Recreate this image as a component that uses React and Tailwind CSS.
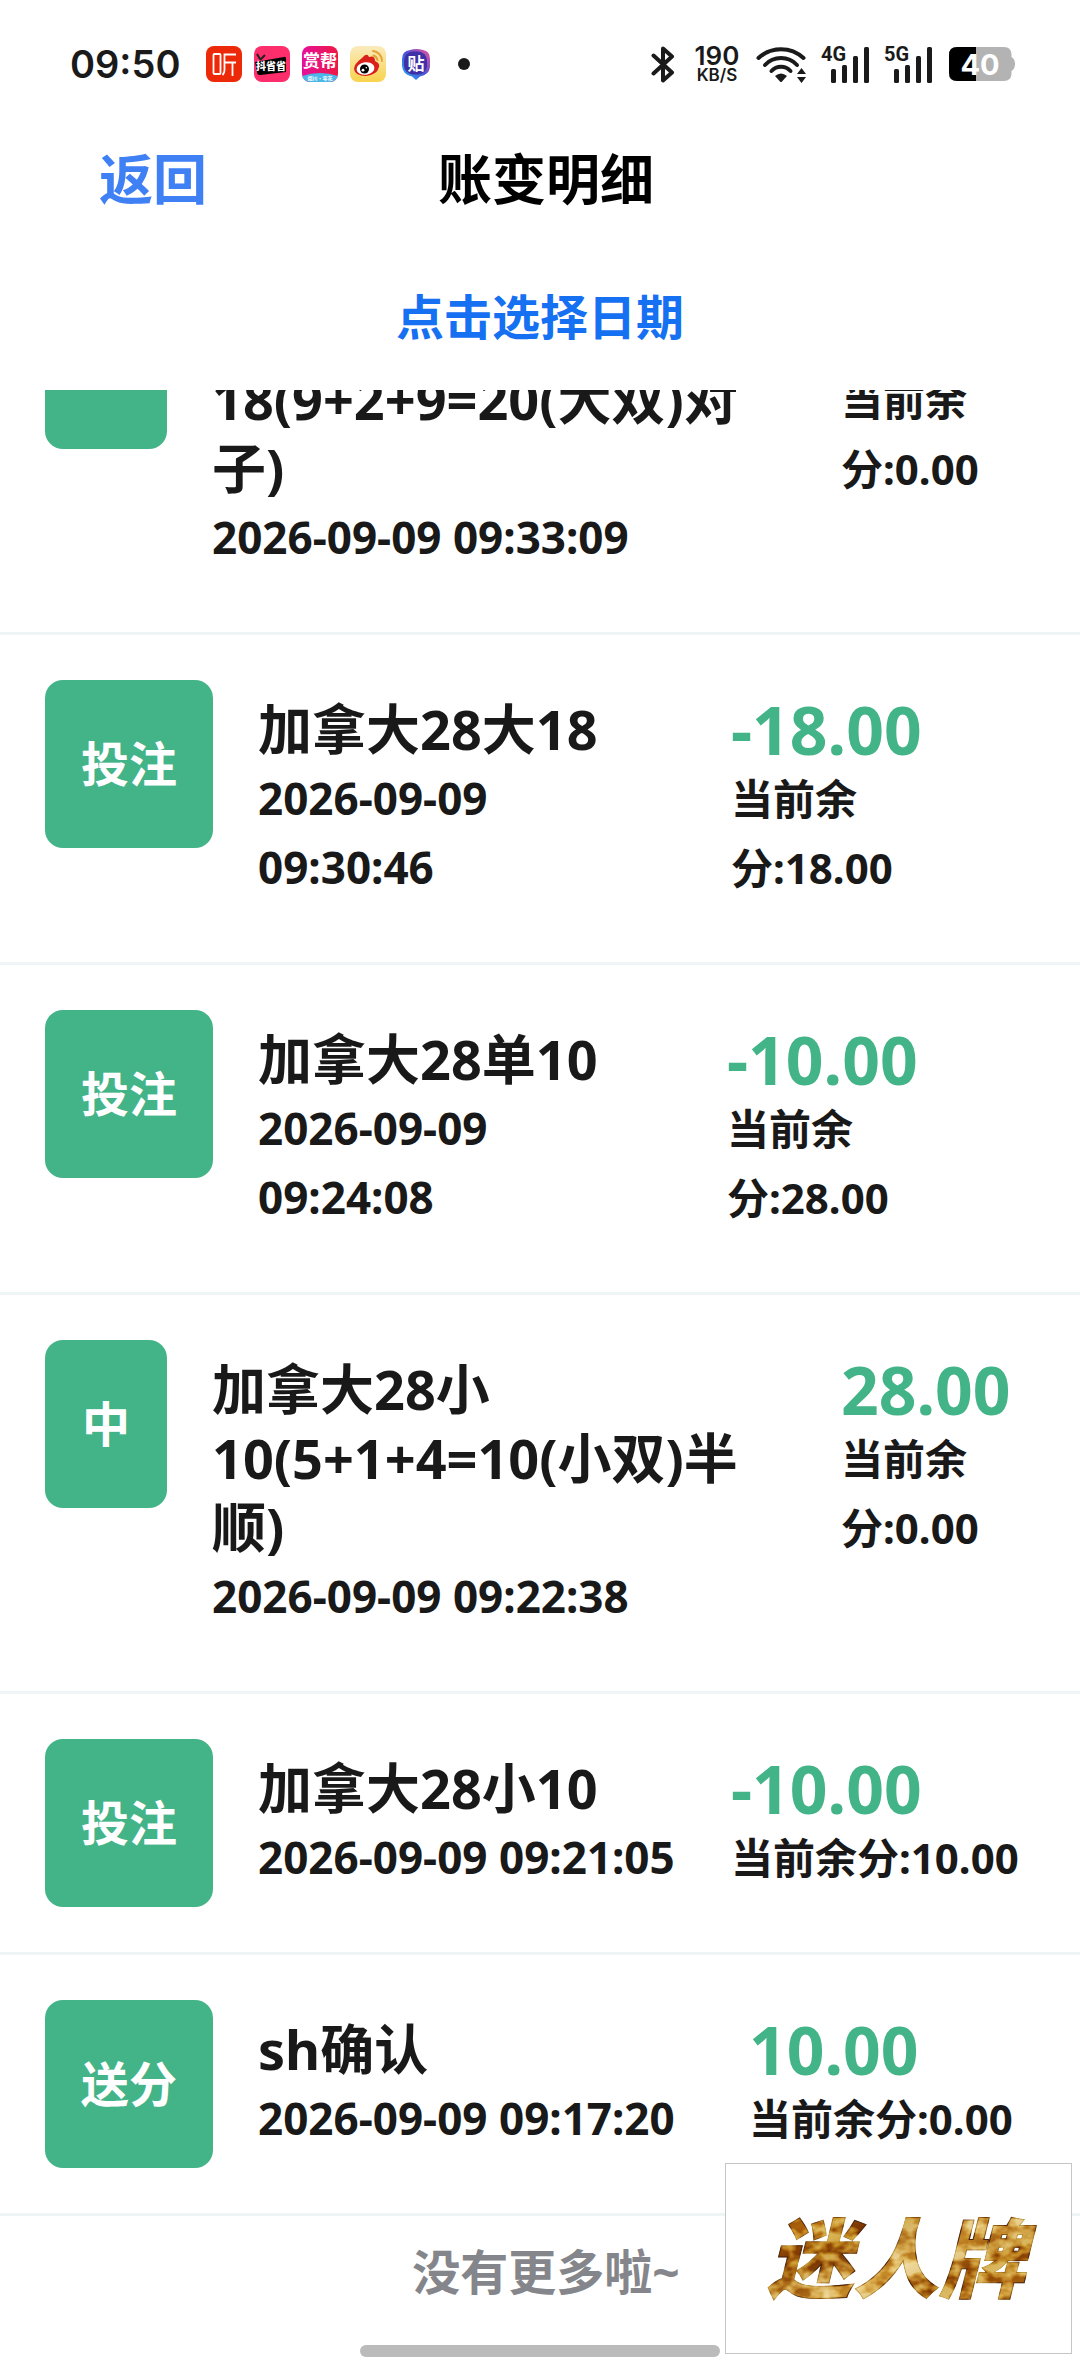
import React from 'react'

const records = [
  {
    type: '中',
    title: '加拿大28大\n18(9+2+9=20(大双)对\n子)',
    time: '2026-09-09 09:33:09',
    amount: '28.00',
    balance: '当前余\n分:0.00',
    col: 'w-[180px]',
    first: true,
  },
  {
    type: '投注',
    title: '加拿大28大18',
    time: '2026-09-09\n09:30:46',
    amount: '-18.00',
    balance: '当前余\n分:18.00',
    col: 'w-[290px]',
  },
  {
    type: '投注',
    title: '加拿大28单10',
    time: '2026-09-09\n09:24:08',
    amount: '-10.00',
    balance: '当前余\n分:28.00',
    col: 'w-[294px]',
  },
  {
    type: '中',
    title: '加拿大28小\n10(5+1+4=10(小双)半\n顺)',
    time: '2026-09-09 09:22:38',
    amount: '28.00',
    balance: '当前余\n分:0.00',
    col: 'w-[180px]',
  },
  {
    type: '投注',
    title: '加拿大28小10',
    time: '2026-09-09 09:21:05',
    amount: '-10.00',
    balance: '当前余分:10.00',
    col: 'w-[290px]',
  },
  {
    type: '送分',
    title: 'sh确认',
    time: '2026-09-09 09:17:20',
    amount: '10.00',
    balance: '当前余分:0.00',
    col: 'w-[272px]',
  },
]

const App = () => {
  return (
    <div className="relative flex min-h-screen flex-col bg-white font-['Noto_Sans','Noto_Sans_CJK_SC',sans-serif] font-bold text-[#191919]">
      <StatusBar />

      <header className='grid h-[102px] grid-cols-3 items-center pl-[99px] pr-[87px] text-[54px] leading-[72px]'>
        <button className='justify-self-start text-[#3f80f5]'>返回</button>
        <h1 className='justify-self-center whitespace-nowrap text-black'>账变明细</h1>
      </header>

      <div className='flex justify-center pt-[51px] pb-[37px]'>
        <button className='text-5xl leading-[72px] text-[#1670f2]'>点击选择日期</button>
      </div>

      <main className='flex-1 overflow-hidden'>
        <ul>
          {records.map((record, index) => (
            <Record key={index} record={record} />
          ))}
        </ul>
        <p className='pt-5 pl-3 text-center text-5xl leading-[72px] text-[#85868b]'>没有更多啦~</p>
      </main>

      <FloatLogo />
      <div className='absolute bottom-[19px] left-1/2 h-3 w-[360px] -translate-x-1/2 rounded-full bg-[#bbbbbb]'></div>
    </div>
  )
}

const Record = ({ record }) => {
  return (
    <li className={`flex items-start border-b-3 border-[#eff4f7] p-[45px] ${record.first ? '-mt-[154px]' : ''}`}>
      <div className='flex h-[168px] min-w-[122px] shrink-0 items-center justify-center rounded-[18px] bg-[#43b388] px-9 text-5xl text-white'>
        {record.type}
      </div>
      <div className='flex-1 whitespace-pre py-[15px] pl-[45px] leading-[69px]'>
        <h2 className='text-[54px] leading-[69px]'>{record.title}</h2>
        <time className='block text-[44px] leading-[69px]'>{record.time}</time>
      </div>
      <div className={`mr-[14px] shrink-0 whitespace-pre py-[15px] ${record.col}`}>
        <div className='text-[66px] leading-[69px] text-[#43b388]'>{record.amount}</div>
        <div className='text-[42px] leading-[69px]'>{record.balance}</div>
      </div>
    </li>
  )
}

const StatusBar = () => {
  return (
    <div className="flex h-[128px] items-center pl-[70px] pr-[65px] font-['Inter',sans-serif] text-[#1a1a1a]">
      <span className='w-[136px] text-[38px] font-semibold leading-none'>09:50</span>
      <div className='flex items-center gap-3'>
        <ListenIcon />
        <SaveIcon />
        <RewardIcon />
        <WeiboIcon />
        <TiebaIcon />
      </div>
      <span className='ml-7 size-3 rounded-full bg-[#1a1a1a]'></span>

      <div className='ml-auto flex items-center'>
        <svg width='24' height='37' viewBox='0 0 24 37' fill='none' stroke='#1a1a1a' strokeWidth='4' strokeLinejoin='round' strokeLinecap='round'>
          <path d='M2.500 9.500 L21 26.500 L12 34.500 V2.500 L21 10.500 L2.500 27.500' />
        </svg>
        <div className='ml-[18px] flex w-[48px] flex-col items-center'>
          <span className='text-[26px] font-semibold leading-[22px]'>190</span>
          <span className='text-[17px] font-semibold leading-4'>KB/S</span>
        </div>
        <svg className='ml-[15px]' width='51' height='37' viewBox='0 0 51 37' fill='none' stroke='#1a1a1a' strokeWidth='4' strokeLinecap='round'>
          <path d='M2.500 12 A33 33 0 0 1 47.500 12' />
          <path d='M9 19 A22 22 0 0 1 41 19' />
          <path d='M15.500 25 A13 13 0 0 1 34.500 25' />
          <path d='M19 30 Q25 25 31 30 L26 35.500 Q25 36.500 24 35.500 Z' fill='#1a1a1a' stroke='none' />
          <path d='M41 28 L45.500 22 L50 28 Z M41 31 L45.500 37 L50 31 Z' fill='#1a1a1a' stroke='none' />
        </svg>
        <Signal label='4G' />
        <Signal label='5G' />
        <svg className='ml-4' width='66' height='34' viewBox='0 0 66 34'>
          <path d='M8 0 H55 Q62 0 62.500 7 V10 Q66 12 66 17 Q66 22 62.500 24 V27 Q62 34 55 34 H8 Q0 34 0 26 V8 Q0 0 8 0 Z' fill='#b3b3b3' />
          <path d='M27 0 V34 H8 Q0 34 0 26 V8 Q0 0 8 0 Z' fill='#000' />
          <text x='31' y='28' textAnchor='middle' fontFamily='Inter' fontSize='29' fontWeight='700' fill='#fff'>40</text>
        </svg>
      </div>
    </div>
  )
}

const Signal = ({ label }) => (
  <svg className='ml-[14px] overflow-visible' width='49' height='37' viewBox='0 0 49 37' fill='#1a1a1a'>
    <text x='0' y='15' fontFamily='Roboto' fontSize='20' fontWeight='700'>{label}</text>
    <rect x='10' y='23' width='5' height='14' rx='1.500' />
    <rect x='21' y='19' width='5' height='18' rx='1.500' />
    <rect x='32' y='10' width='5' height='27' rx='1.500' />
    <rect x='43' y='1' width='5' height='36' rx='1.500' />
  </svg>
)

const ListenIcon = () => (
  <svg width='36' height='36' viewBox='0 0 36 36' fill='none' stroke='#fff' strokeWidth='1.800'>
    <rect width='36' height='36' rx='8' fill='#ec2a09' stroke='none' />
    <rect x='7.500' y='8' width='7' height='20' rx='1' />
    <path d='M30 8.500 H18.500 V24 Q18.500 27 16.500 29 M18.500 16.500 H30 M26.500 16.500 V30' />
  </svg>
)

const SaveIcon = () => (
  <svg width='36' height='36' viewBox='0 0 36 36'>
    <rect width='36' height='36' rx='8' fill='#fe2d6c' />
    <path d='M1 16 L30 11 Q32 10 32 13 V26 L6 29 Q3 29 3 26 Z' fill='#000' />
    <path d='M3 8 L6 13 M11 9 L6 14' stroke='#222' strokeWidth='2' />
    <text x='17' y='24' textAnchor='middle' fontFamily='Noto Sans CJK SC' fontSize='10' fontWeight='900' fill='#fff'>抖省省</text>
  </svg>
)

const RewardIcon = () => (
  <svg width='36' height='36' viewBox='0 0 36 36'>
    <defs>
      <clipPath id='rewardClip'><rect width='36' height='36' rx='8' /></clipPath>
      <linearGradient id='rewardBg' x1='0' y1='0' x2='1' y2='0'>
        <stop offset='0' stopColor='#e5109a' />
        <stop offset='1' stopColor='#ee1846' />
      </linearGradient>
    </defs>
    <g clipPath='url(#rewardClip)'>
      <rect width='36' height='36' fill='url(#rewardBg)' />
      <path d='M0 30 Q18 24 36 30 V36 H0 Z' fill='#4bb6e8' />
    </g>
    <text x='18' y='21' textAnchor='middle' fontFamily='Noto Sans CJK SC' fontSize='17' fontWeight='700' fill='#fff'>赏帮</text>
    <text x='18' y='34' textAnchor='middle' fontFamily='Noto Sans CJK SC' fontSize='5' fontWeight='700' fill='#fff'>阅川·零花</text>
  </svg>
)

const WeiboIcon = () => (
  <svg width='36' height='36' viewBox='0 0 36 36'>
    <defs>
      <linearGradient id='weiboBg' x1='0' y1='0' x2='0' y2='1'>
        <stop offset='0' stopColor='#faebbd' />
        <stop offset='1' stopColor='#f9d34d' />
      </linearGradient>
    </defs>
    <rect width='36' height='36' rx='8' fill='url(#weiboBg)' />
    <path d='M12 12 Q17 6 19 11 Q25 9 25 15 Q30 17 29 21 Q27 29 16 30 Q5 30 4 23 Q4 18 12 12 Z' fill='#d9201b' />
    <ellipse cx='15.500' cy='22.500' rx='9' ry='6.200' fill='#fff' transform='rotate(-8 15.500 22.500)' />
    <circle cx='14.500' cy='23' r='4.500' fill='#000' />
    <circle cx='13' cy='24.200' r='1.400' fill='#fff' />
    <circle cx='16.300' cy='21.800' r='.8' fill='#fff' />
    <path d='M23 5 A10 10 0 0 1 32 15 M23.500 9.500 A6 6 0 0 1 27.500 14' fill='none' stroke='#e3a53a' strokeWidth='2' strokeLinecap='round' />
  </svg>
)

const TiebaIcon = () => (
  <svg className='ml-1' width='28' height='31' viewBox='0 0 28 31'>
    <defs>
      <linearGradient id='tiebaBg' x1='0' y1='1' x2='1' y2='0'>
        <stop offset='0' stopColor='#22b8f5' />
        <stop offset='.5' stopColor='#4a53d8' />
        <stop offset='1' stopColor='#f0509a' />
      </linearGradient>
    </defs>
    <path d='M8 1 Q14 -1 21 1 Q28 2 28 10 V18 Q27 26 18 27.500 L14 31 L10 27.500 Q1 26 0 17 V10 Q0 2 8 1 Z' fill='url(#tiebaBg)' />
    <rect x='2' y='2.500' width='23' height='23' rx='9' fill='#4030a8' />
    <text x='14' y='20.500' textAnchor='middle' fontFamily='Noto Sans CJK SC' fontSize='17' fontWeight='700' fill='#fff'>贴</text>
  </svg>
)

// gold foil wordmark, the grain comes from a turbulence filter
const FloatLogo = () => (
  <button aria-label='迷人牌' className='absolute right-2 bottom-[22px] flex h-[191px] w-[347px] items-center justify-center border border-[#c6c6c8] bg-white'>
    <svg width='290' height='110' viewBox='0 0 290 110'>
      <defs>
        <linearGradient id='gold' x1='0' y1='0' x2='1' y2='1'>
          <stop offset='0' stopColor='#a8700f' />
          <stop offset='.2' stopColor='#d09c34' />
          <stop offset='.35' stopColor='#a86c12' />
          <stop offset='.55' stopColor='#e0bb66' />
          <stop offset='.7' stopColor='#b47a1c' />
          <stop offset='.85' stopColor='#d0a041' />
          <stop offset='1' stopColor='#8c5a10' />
        </linearGradient>
        <filter id='foil' x='0' y='0' width='1' height='1' colorInterpolationFilters='sRGB'>
          <feTurbulence type='fractalNoise' baseFrequency='0.050 0.070' numOctaves='3' seed='8' result='noise' />
          <feColorMatrix in='noise' type='matrix' values='3.200 0 0 0 -1.050  3.200 0 0 0 -1.100  3.200 0 0 0 -1.150  0 0 0 0 1' result='grain' />
          <feBlend in='grain' in2='SourceGraphic' mode='soft-light' result='mix' />
          <feComposite in='mix' in2='SourceGraphic' operator='in' />
        </filter>
      </defs>
      <text x='142' y='87' textAnchor='middle' fontFamily='Noto Sans CJK SC' fontSize='86' fontWeight='900' fontStyle='italic' fill='url(#gold)' stroke='#8f5e14' strokeWidth='1' filter='url(#foil)'>迷人牌</text>
    </svg>
  </button>
)

export default App
